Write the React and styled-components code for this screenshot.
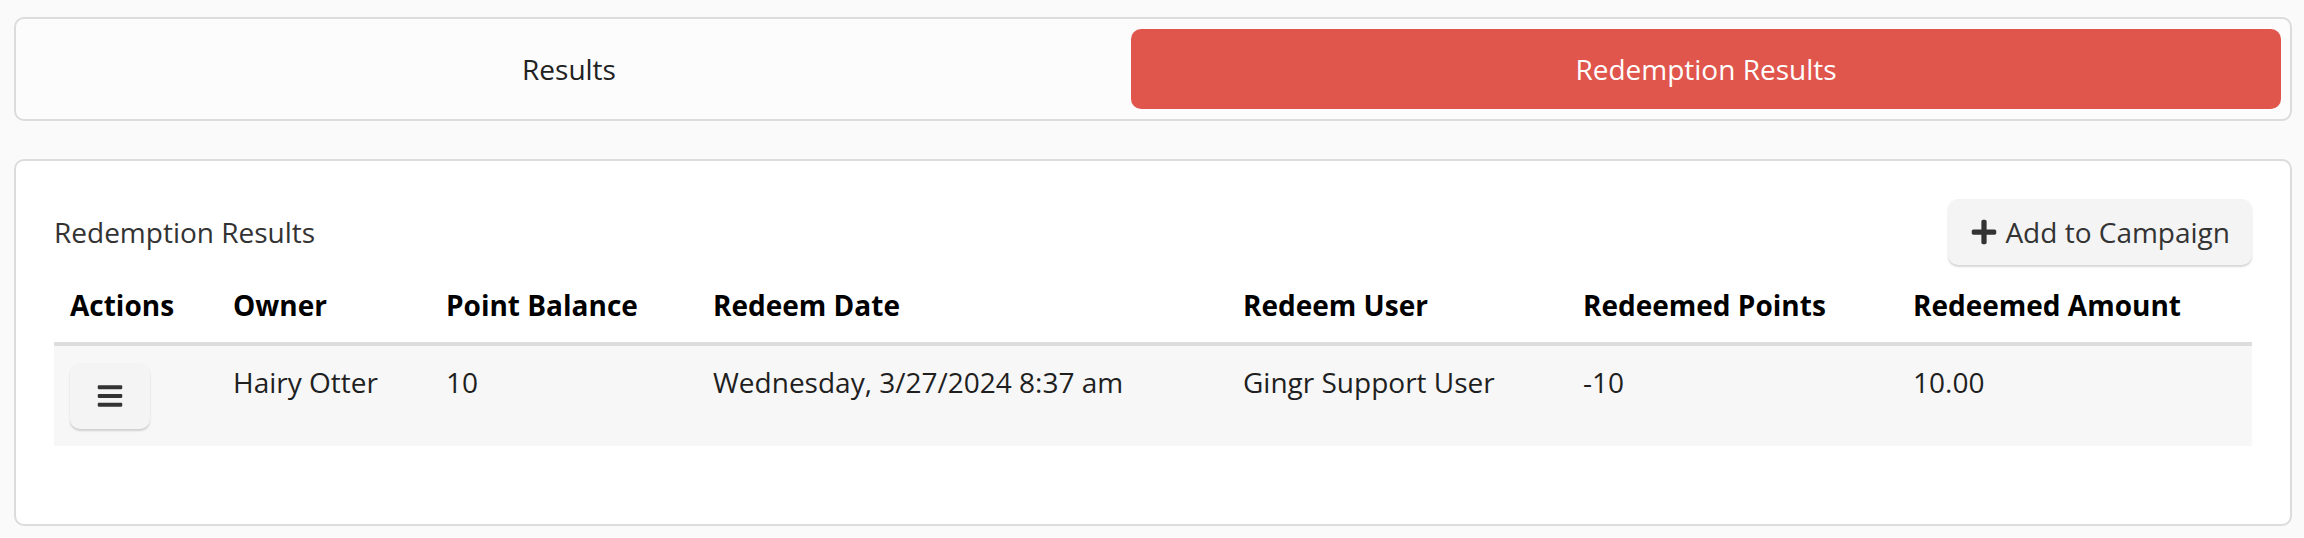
import React from "react";
import styled, { createGlobalStyle } from "styled-components";
import { FaBars, FaPlus } from "react-icons/fa";

const GlobalStyle = createGlobalStyle`
  html, body {
    margin: 0;
    background: #fafafa;
    font-family: "Open Sans", "Liberation Sans", sans-serif;
    font-size: 28px;
    color: #222;
  }
`;

const Page = styled.div`
  padding: 17px 12px 0 14px;
`;

const TabBar = styled.div`
  display: grid;
  grid-template-columns: 1086fr 1150fr;
  gap: 19px;
  padding: 10px 9px 10px 10px;
  border: 2px solid #dcdcdc;
  border-radius: 10px;
  background: #fcfcfc;
`;

const Tab = styled.div`
  display: flex;
  align-items: center;
  justify-content: center;
  height: 80px;
  border-radius: 10px;
  background: ${({ $active }) => ($active ? "#e0554c" : "transparent")};
  color: ${({ $active }) => ($active ? "#fff" : "#222")};
`;

const Card = styled.section`
  margin-top: 38px;
  padding: 38px 38px 78px 38px;
  border: 2px solid #dcdcdc;
  border-radius: 10px;
  background: #fff;
`;

const Toolbar = styled.div`
  display: flex;
  align-items: center;
  justify-content: space-between;
  margin-bottom: 3px;
`;

const Title = styled.div`
  color: #333;
`;

const Button = styled.button`
  display: flex;
  align-items: center;
  justify-content: center;
  gap: 7px;
  height: 66px;
  padding: ${({ $icon }) => ($icon ? "0" : "0 22px 0 22px")};
  width: ${({ $icon }) => ($icon ? "80px" : "auto")};
  border: none;
  border-radius: 10px;
  background: #f4f4f4;
  box-shadow: 0 2px 2px rgba(0, 0, 0, 0.16);
  font: inherit;
  color: #333;
`;

const Table = styled.table`
  width: 100%;
  border-collapse: collapse;
  table-layout: fixed;
`;

const Col = styled.col`
  width: ${({ $w }) => $w};
`;

const Th = styled.th`
  padding: 16px;
  line-height: 42px;
  text-align: left;
  font-weight: 700;
  color: #000;
  border-bottom: 4px solid #dddddd;
  white-space: nowrap;
`;

const Row = styled.tr`
  background: #f7f7f7;
`;

const Td = styled.td`
  padding: 17px 16px;
  line-height: 38px;
  vertical-align: top;
  color: #1f1f1f;
  white-space: nowrap;
`;

const columns = [
  ["Actions", "163px"],
  ["Owner", "213px"],
  ["Point Balance", "267px"],
  ["Redeem Date", "530px"],
  ["Redeem User", "340px"],
  ["Redeemed Points", "330px"],
  ["Redeemed Amount", "auto"],
];

const rows = [
  {
    owner: "Hairy Otter",
    balance: "10",
    date: "Wednesday, 3/27/2024 8:37 am",
    user: "Gingr Support User",
    points: "-10",
    amount: "10.00",
  },
];

export default function App() {
  return (
    <Page>
      <GlobalStyle />
      <TabBar>
        <Tab>Results</Tab>
        <Tab $active>Redemption Results</Tab>
      </TabBar>

      <Card>
        <Toolbar>
          <Title>Redemption Results</Title>
          <Button>
            <FaPlus size={28} />
            Add to Campaign
          </Button>
        </Toolbar>

        <Table>
          <colgroup>
            {columns.map(([name, w]) => (
              <Col key={name} $w={w} />
            ))}
          </colgroup>
          <thead>
            <tr>
              {columns.map(([name]) => (
                <Th key={name}>{name}</Th>
              ))}
            </tr>
          </thead>
          <tbody>
            {rows.map((r, i) => (
              <Row key={i}>
                <Td>
                  <Button $icon aria-label="Actions">
                    <FaBars size={28} />
                  </Button>
                </Td>
                <Td>{r.owner}</Td>
                <Td>{r.balance}</Td>
                <Td>{r.date}</Td>
                <Td>{r.user}</Td>
                <Td>{r.points}</Td>
                <Td>{r.amount}</Td>
              </Row>
            ))}
          </tbody>
        </Table>
      </Card>
    </Page>
  );
}
